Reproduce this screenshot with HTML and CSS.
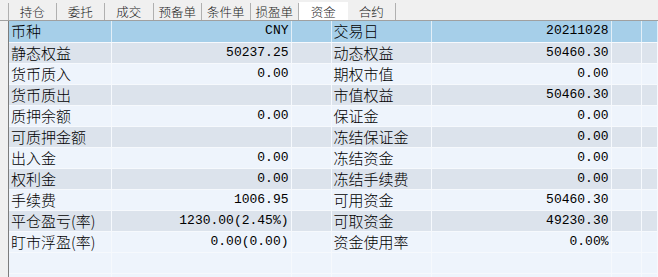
FILE: index.html
```html
<!DOCTYPE html>
<html lang="zh-CN">
<head>
  <meta charset="UTF-8">
  <title>资金</title>
  <link rel="stylesheet" href="styles.css">
</head>
<body>
  <div class="tabs">
    <div class="tab">持仓</div>
    <div class="tab">委托</div>
    <div class="tab">成交</div>
    <div class="tab">预备单</div>
    <div class="tab">条件单</div>
    <div class="tab">损盈单</div>
    <div class="tab active">资金</div>
    <div class="tab">合约</div>
  </div>

  <div class="grid-wrap">
    <table class="grid">
      <colgroup>
        <col class="c-label"><col class="c-value"><col class="c-gap">
        <col class="c-label2"><col class="c-value"><col class="c-gap2"><col>
      </colgroup>
      <tr class="head">
        <td>币种</td><td class="num">CNY</td><td></td>
        <td>交易日</td><td class="num">20211028</td><td></td><td></td>
      </tr>
      <tr class="odd">
        <td>静态权益</td><td class="num">50237.25</td><td></td>
        <td>动态权益</td><td class="num">50460.30</td><td></td><td></td>
      </tr>
      <tr>
        <td>货币质入</td><td class="num">0.00</td><td></td>
        <td>期权市值</td><td class="num">0.00</td><td></td><td></td>
      </tr>
      <tr class="odd">
        <td>货币质出</td><td class="num"></td><td></td>
        <td>市值权益</td><td class="num">50460.30</td><td></td><td></td>
      </tr>
      <tr>
        <td>质押余额</td><td class="num">0.00</td><td></td>
        <td>保证金</td><td class="num">0.00</td><td></td><td></td>
      </tr>
      <tr class="odd">
        <td>可质押金额</td><td class="num"></td><td></td>
        <td>冻结保证金</td><td class="num">0.00</td><td></td><td></td>
      </tr>
      <tr>
        <td>出入金</td><td class="num">0.00</td><td></td>
        <td>冻结资金</td><td class="num">0.00</td><td></td><td></td>
      </tr>
      <tr class="odd">
        <td>权利金</td><td class="num">0.00</td><td></td>
        <td>冻结手续费</td><td class="num">0.00</td><td></td><td></td>
      </tr>
      <tr>
        <td>手续费</td><td class="num">1006.95</td><td></td>
        <td>可用资金</td><td class="num">50460.30</td><td></td><td></td>
      </tr>
      <tr class="odd">
        <td>平仓盈亏(率)</td><td class="num">1230.00(2.45%)</td><td></td>
        <td>可取资金</td><td class="num">49230.30</td><td></td><td></td>
      </tr>
      <tr>
        <td>盯市浮盈(率)</td><td class="num">0.00(0.00)</td><td></td>
        <td>资金使用率</td><td class="num">0.00%</td><td></td><td></td>
      </tr>
      <tr>
        <td></td><td></td><td></td><td></td><td></td><td></td><td></td>
      </tr>
      <tr>
        <td></td><td></td><td></td><td></td><td></td><td></td><td></td>
      </tr>
    </table>
  </div>
</body>
</html>
```

FILE: styles.css
```css
* {
  margin: 0;
  padding: 0;
  box-sizing: border-box;
}

body {
  background: #f0f0f0;
  width: 658px;
  height: 277px;
  overflow: hidden;
  font-family: "Noto Sans CJK SC", sans-serif;
  font-weight: 300;
  color: #000;
}

/* Tab strip */
.tabs {
  display: flex;
  height: 21px;
  padding: 3px 0 0 8px;
  border-bottom: 1px solid #a0a0a0;
}

.tab {
  width: 48.5px;
  height: 17px;
  border-right: 1px solid #b0b0b0;
  font-size: 12.5px;
  line-height: 17px;
  text-align: center;
  color: #1a1a1a;
}

.tab:first-child {
  border-left: 1px solid #b0b0b0;
}

.tab.active {
  background: #fff;
  height: 18px;
  margin-top: -1px;
  line-height: 19px;
  border-right: none;
}

/* Fund grid */
.grid-wrap {
  margin-left: 8px;
  border-left: 1px solid #7c7c7c;
  height: 256px;
  overflow: hidden;
}

.grid {
  border-collapse: collapse;
  table-layout: fixed;
  width: 649px;
  background: #eef4fc;
}

.c-label { width: 102px; }
.c-value { width: 180px; }
.c-gap { width: 40px; }
.c-label2 { width: 100px; }
.c-gap2 { width: 30px; }

.grid td {
  height: 21px;
  border-right: 1px solid #f6f9fd;
  border-bottom: 1px solid #f6f9fd;
  font-size: 15px;
  line-height: 20px;
  padding: 0 2px;
  white-space: nowrap;
  overflow: hidden;
  vertical-align: middle;
}

.grid tr.head td {
  background: #a6cfe9;
  border-right-color: #e2eff8;
}

.grid tr.odd td {
  background: #dce3ec;
}

.grid td.num {
  text-align: right;
  font-family: "Liberation Mono", monospace;
  font-weight: 400;
  font-size: 13px;
}
```
